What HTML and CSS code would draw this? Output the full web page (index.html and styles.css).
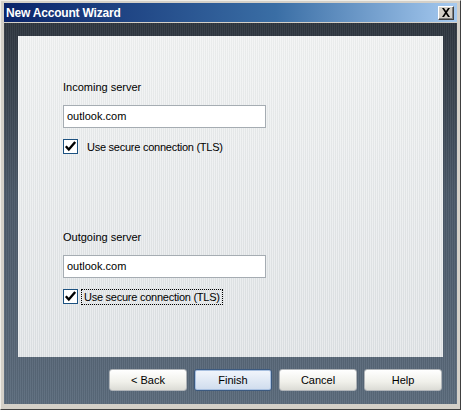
FILE: index.html
```html
<!DOCTYPE html>
<html>
<head>
<meta charset="utf-8">
<link rel="stylesheet" href="styles.css">
</head>
<body>
<div class="window">
  <div class="titlebar">
    <span class="title">New Account Wizard</span>
    <span class="close"><svg width="10" height="9" viewBox="0 0 10 9"><path d="M1 0h2l2 3 2-3h2L6 4.5 9 9H7L5 6 3 9H1l3-4.5z" fill="#000"/></svg></span>
  </div>
  <div class="body">
    <div class="panel">
      <div class="group">
        <div class="label">Incoming server</div>
        <div class="input">outlook.com</div>
        <div class="check"><span class="box"><svg width="13" height="13" viewBox="0 0 13 13"><path d="M1.8 6.3l3 3.2 6.4-7.5" stroke="#000" stroke-width="2.4" fill="none"/></svg></span><span class="ctext">Use secure connection (TLS)</span></div>
      </div>
      <div class="group second">
        <div class="label">Outgoing server</div>
        <div class="input">outlook.com</div>
        <div class="check"><span class="box"><svg width="13" height="13" viewBox="0 0 13 13"><path d="M1.8 6.3l3 3.2 6.4-7.5" stroke="#000" stroke-width="2.4" fill="none"/></svg></span><span class="ctext focus">Use secure connection (TLS)</span></div>
      </div>
    </div>
    <div class="buttons">
      <button class="btn">&lt; Back</button>
      <button class="btn default">Finish</button>
      <button class="btn">Cancel</button>
      <button class="btn">Help</button>
    </div>
  </div>
</div>
</body>
</html>
```
FILE: styles.css
```css
* { box-sizing: border-box; }
html, body { margin: 0; padding: 0; }
body { width: 461px; height: 410px; overflow: hidden; background: #d4d0c8; font-family: "Liberation Sans", Arial, sans-serif; }
.window {
  width: 461px; height: 410px;
  background: #d4d0c8;
  border-top: 1px solid #f0eee8;
  border-left: 1px solid #f0eee8;
  border-right: 1px solid #404040;
  border-bottom: 1px solid #404040;
  padding: 2px 3px 5px 3px;
  display: flex; flex-direction: column;
}
.titlebar {
  height: 19px;
  background: linear-gradient(to right, #0a246a, #3a6ea5 60%, #a6caf0);
  display: flex; align-items: center; justify-content: space-between;
  padding: 0 3px 0 2px;
}
.title { color: #fff; font-weight: bold; font-size: 12px; letter-spacing: -0.2px; font-family: "Liberation Sans", sans-serif; }
.close {
  width: 16px; height: 14px;
  background: #d4d0c8;
  border-top: 1px solid #fff; border-left: 1px solid #fff;
  border-right: 1px solid #404040; border-bottom: 1px solid #404040;
  box-shadow: inset -1px -1px 0 #808080;
  display: flex; align-items: center; justify-content: center;
}
.body {
  flex: 1;
  margin-top: 1px;
  background:
    repeating-linear-gradient(to right, rgba(255,255,255,0.05) 0 1px, rgba(0,0,0,0.05) 1px 2px),
    linear-gradient(to bottom, #2e363f, #4a5868 45%, #5b6b7c);
  padding: 13px 14px 0 14px;
  display: flex; flex-direction: column;
}
.panel {
  height: 321px;
  background:
    repeating-linear-gradient(to right, rgba(255,255,255,0.35) 0 1px, rgba(0,0,0,0.02) 1px 2px),
    linear-gradient(to bottom, #eef0f0, #dde1e4);
  padding: 44px 0 0 45px;
  display: flex; flex-direction: column;
}
.group { display: flex; flex-direction: column; }
.group.second { margin-top: 75px; }
.label { font-size: 11px; color: #000; height: 14px; line-height: 14px; }
.input {
  margin-top: 11px;
  width: 203px; height: 23px;
  background: #fff;
  border: 1px solid #a5acb2;
  font-size: 11px; line-height: 21px; padding-left: 3px; color: #000;
}
.check { margin-top: 10px; display: flex; align-items: center; height: 17px; }
.box {
  width: 15px; height: 15px; background: #fff; border: 1px solid #1c5180;
  display: flex; align-items: center; justify-content: center;
}
.box svg { display: block; }
.ctext { font-size: 11px; letter-spacing: -0.25px; margin-left: 6px; padding: 1px 2px; border: 1px dotted transparent; }
.ctext.focus { border-color: #000; margin-left: 3px; }
.buttons {
  display: flex; justify-content: flex-end; gap: 7px;
  margin-top: 12px; padding-right: 1px;
}
.btn {
  width: 78px; height: 22px;
  background: linear-gradient(to bottom, #fff, #f0f0ea 60%, #dcdcd6);
  border: 1px solid #b0b4b8;
  border-radius: 3px;
  font-family: "Liberation Sans", sans-serif;
  font-size: 11px; color: #000;
  padding: 0;
}
.btn.default {
  background: linear-gradient(to bottom, #f2f6fc, #cfdced);
  border: 1px solid #3c5a80;
  box-shadow: inset 0 0 0 1px #a8c0e0;
}
```
